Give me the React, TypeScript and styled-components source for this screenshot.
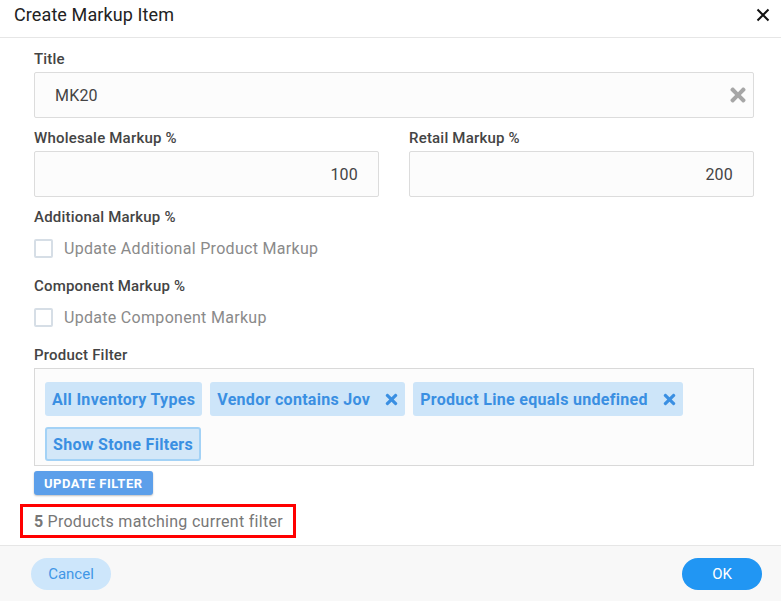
import React from "react";
import styled, { createGlobalStyle } from "styled-components";
import { FaTimes } from "react-icons/fa";

const Global = createGlobalStyle`
  html, body { margin: 0; padding: 0; background: #fff; }
  body { font-family: Roboto, "Liberation Sans", Arial, sans-serif; }
  * { box-sizing: border-box; }
`;

const Dialog = styled.div`
  width: 781px;
  height: 601px;
  display: flex;
  flex-direction: column;
  background: #fff;
  overflow: hidden;
`;

const Header = styled.div`
  height: 38px;
  flex: none;
  display: flex;
  align-items: flex-start;
  justify-content: space-between;
  padding: 3px 6px 0 14px;
  border-bottom: 1px solid #e6e6e6;
`;

const HeaderTitle = styled.h1`
  margin: 0;
  font-size: 18px;
  font-weight: 400;
  color: #222;
  line-height: 24px;
  letter-spacing: 0.1px;
`;

const CloseBtn = styled.button`
  width: 24px;
  height: 24px;
  border: 0;
  background: none;
  padding: 0;
  display: flex;
  align-items: center;
  justify-content: center;
  cursor: pointer;
`;

const Body = styled.div`
  flex: 1;
  padding: 11px 27px 0 34px;
  display: flex;
  flex-direction: column;
  align-items: stretch;
`;

const Field = styled.div`
  display: flex;
  flex-direction: column;
  margin-bottom: 10px;
`;

const Row = styled.div`
  display: grid;
  grid-template-columns: 1fr 1fr;
  column-gap: 30px;
`;

const Label = styled.label`
  font-size: 15px;
  line-height: 20px;
  font-weight: 500;
  color: #444;
  margin-bottom: 3px;
  letter-spacing: 0.2px;
`;

const InputBox = styled.div<{ $align?: "left" | "right" }>`
  position: relative;
  height: 46px;
  border: 1px solid #dcdcdc;
  border-radius: 2px;
  background: #fcfcfc;
  display: flex;
  align-items: center;
  justify-content: ${(p) => (p.$align === "right" ? "flex-end" : "flex-start")};
  padding: ${(p) => (p.$align === "right" ? "0 20px 0 12px" : "0 40px 0 20px")};
  font-size: 16px;
  color: #444;
  letter-spacing: 0.2px;
`;

const ClearIcon = styled.span`
  position: absolute;
  right: 4px;
  top: 50%;
  transform: translateY(-50%);
  display: flex;
  color: #a6a6a6;
  font-size: 22px;
`;

const CheckRow = styled.div`
  display: flex;
  align-items: center;
  height: 24px;
  margin: 6px 0 6px;
  gap: 11px;
`;

const CheckBox = styled.span`
  width: 19px;
  height: 19px;
  border: 2px solid #d6dee6;
  border-radius: 2px;
  background: #fff;
  flex: none;
`;

const CheckText = styled.span`
  font-size: 16px;
  color: #8a8a8a;
  letter-spacing: 0.3px;
`;

const FilterBox = styled.div`
  border: 1px solid #d9d9d9;
  background: #fcfcfc;
  height: 98px;
  padding: 13px 10px 4px;
  display: flex;
  flex-wrap: wrap;
  align-content: flex-start;
  gap: 11px 8px;
`;

const Chip = styled.span<{ $outlined?: boolean; $removable?: boolean }>`
  height: 34px;
  display: inline-flex;
  align-items: center;
  gap: 13px;
  padding: 0 ${(p) => (p.$outlined ? "6px" : p.$removable ? "5px" : "7px")} 0
    ${(p) => (p.$outlined ? "6px" : "7px")};
  border-radius: 3px;
  background: ${(p) => (p.$outlined ? "#d3e7f8" : "#cde5f9")};
  border: ${(p) => (p.$outlined ? "2px solid #a3d2f6" : "0")};
  color: #3a8fe2;
  font-weight: 700;
  font-size: 16px;
  letter-spacing: 0.3px;
  white-space: nowrap;
`;

const ChipX = styled.span`
  display: flex;
  font-size: 17px;
  color: #3a8fe2;
`;

const UpdateButton = styled.button`
  align-self: flex-start;
  margin-top: 5px;
  height: 24px;
  padding: 0 10px;
  border: 0;
  border-radius: 3px;
  background: #5c9fea;
  box-shadow: 0 1px 2px rgba(0, 0, 0, 0.25);
  color: #fff;
  font-family: Roboto, "Liberation Sans", Arial, sans-serif;
  font-weight: 700;
  font-size: 13px;
  letter-spacing: 0.5px;
`;

const MatchBox = styled.div`
  align-self: flex-start;
  margin: 9px 0 0 -14px;
  width: 276px;
  height: 34px;
  border: 3px solid #f00;
  display: flex;
  align-items: center;
  padding: 0 11px;
  font-size: 16px;
  color: #777;
  letter-spacing: 0.3px;
  white-space: nowrap;
`;

const Count = styled.b`
  font-weight: 700;
  margin-right: 4px;
`;

const Footer = styled.div`
  height: 56px;
  flex: none;
  border-top: 1px solid #e6e6e6;
  background: #f8f8f8;
  display: flex;
  justify-content: space-between;
  align-items: flex-start;
  padding: 12px 19px 0 31px;
`;

const PillButton = styled.button<{ $primary?: boolean }>`
  width: 80px;
  height: 32px;
  border: 0;
  border-radius: 16px;
  background: ${(p) => (p.$primary ? "#2196f3" : "#cde6fb")};
  color: ${(p) => (p.$primary ? "#fff" : "#4196e6")};
  font-family: Roboto, "Liberation Sans", Arial, sans-serif;
  font-size: 15px;
  cursor: pointer;
`;

export default function App() {
  return (
    <Dialog>
      <Global />
      <Header>
        <HeaderTitle>Create Markup Item</HeaderTitle>
        <CloseBtn aria-label="close">
          <svg width="14" height="14" viewBox="0 0 14 14">
            <path d="M1.5 1.5 L12.5 12.5 M12.5 1.5 L1.5 12.5" stroke="#111" strokeWidth="2" />
          </svg>
        </CloseBtn>
      </Header>
      <Body>
        <Field>
          <Label>Title</Label>
          <InputBox>
            MK20
            <ClearIcon>
              <FaTimes />
            </ClearIcon>
          </InputBox>
        </Field>
        <Row>
          <Field>
            <Label>Wholesale Markup %</Label>
            <InputBox $align="right">100</InputBox>
          </Field>
          <Field>
            <Label>Retail Markup %</Label>
            <InputBox $align="right">200</InputBox>
          </Field>
        </Row>
        <Field>
          <Label>Additional Markup %</Label>
          <CheckRow>
            <CheckBox />
            <CheckText>Update Additional Product Markup</CheckText>
          </CheckRow>
        </Field>
        <Field>
          <Label>Component Markup %</Label>
          <CheckRow>
            <CheckBox />
            <CheckText>Update Component Markup</CheckText>
          </CheckRow>
        </Field>
        <Label>Product Filter</Label>
        <FilterBox>
          <Chip>All Inventory Types</Chip>
          <Chip $removable>
            Vendor contains Jov
            <ChipX>
              <FaTimes />
            </ChipX>
          </Chip>
          <Chip $removable>
            Product Line equals undefined
            <ChipX>
              <FaTimes />
            </ChipX>
          </Chip>
          <Chip $outlined>Show Stone Filters</Chip>
        </FilterBox>
        <UpdateButton>UPDATE FILTER</UpdateButton>
        <MatchBox>
          <Count>5</Count>Products matching current filter
        </MatchBox>
      </Body>
      <Footer>
        <PillButton>Cancel</PillButton>
        <PillButton $primary>OK</PillButton>
      </Footer>
    </Dialog>
  );
}
